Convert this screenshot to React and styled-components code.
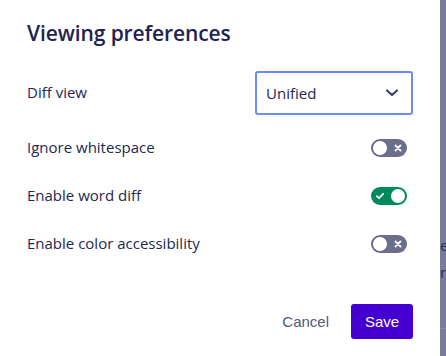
import React, { useState } from "react";
import styled, { createGlobalStyle } from "styled-components";

const Global = createGlobalStyle`
  html, body { margin: 0; padding: 0; background: #ffffff; }
  body { font-family: "Open Sans", "Noto Sans", sans-serif; }
`;

const Page = styled.div`
  display: flex;
  width: 446px;
  height: 356px;
  overflow: hidden;
`;

const Dialog = styled.div`
  width: 440px;
  flex: none;
  box-sizing: border-box;
  padding: 18px 27px 0 27px;
  display: flex;
  flex-direction: column;
  background: #ffffff;
  color: #22284f;
`;

const Title = styled.h1`
  margin: 0;
  font-family: "Open Sans", sans-serif;
  font-weight: 600;
  font-size: 21px;
  line-height: 30px;
  color: #1e2350;
  letter-spacing: -0.1px;
`;

const Rows = styled.div`
  display: flex;
  flex-direction: column;
  margin-top: 23px;
`;

const Row = styled.div`
  display: flex;
  align-items: center;
  justify-content: space-between;
  height: ${(p) => p.$h || 48}px;
  margin-bottom: ${(p) => p.$mb || 0}px;
`;

const Label = styled.span`
  font-family: "Open Sans", sans-serif;
  font-size: 15px;
  line-height: 20px;
  margin-top: -2px;
  color: #22284f;
`;

const Select = styled.div`
  box-sizing: border-box;
  width: 158px;
  height: 44px;
  border: 2px solid #6b8bfb;
  border-radius: 3px;
  display: flex;
  align-items: center;
  justify-content: space-between;
  padding: 0 12px 0 9px;
  font-family: "Open Sans", sans-serif;
  font-size: 15px;
  color: #22284f;
`;

const Toggle = styled.button`
  position: relative;
  width: 36px;
  height: 18px;
  border: none;
  padding: 0;
  margin-right: 6px;
  border-radius: 9px;
  background: ${(p) => (p.$on ? "#008a59" : "#6b6f8c")};
  cursor: pointer;
  display: flex;
  align-items: center;
`;

const Knob = styled.span`
  position: absolute;
  top: 2px;
  left: ${(p) => (p.$on ? "20px" : "2px")};
  width: 14px;
  height: 14px;
  border-radius: 50%;
  background: #ffffff;
`;

const ToggleIcon = styled.svg`
  position: absolute;
  top: 5px;
  left: ${(p) => (p.$on ? "5px" : "23px")};
  width: 8px;
  height: 8px;
`;

const Footer = styled.div`
  display: flex;
  justify-content: flex-end;
  align-items: center;
  gap: 22px;
  margin-top: 36px;
`;

const CancelBtn = styled.button`
  border: none;
  background: transparent;
  padding: 0;
  font-family: "Liberation Sans", Arial, sans-serif;
  font-size: 15px;
  color: #52587a;
  cursor: pointer;
`;

const SaveBtn = styled.button`
  width: 62px;
  height: 35px;
  border: none;
  border-radius: 3px;
  background: #4300d0;
  color: #ffffff;
  font-family: "Liberation Sans", Arial, sans-serif;
  font-size: 15px;
  cursor: pointer;
`;

const Blanket = styled.div`
  flex: 1;
  background: #7b7b99;
  overflow: hidden;
  display: flex;
  flex-direction: column;
  padding-top: 232px;
`;

const BgText = styled.span`
  font-family: "Open Sans", sans-serif;
  font-size: 15px;
  line-height: 27px;
  color: #2a2e58;
`;

const BgLine = styled.div`
  margin-top: 42px;
  height: 1px;
  background: #8d8ca8;
`;

function Switch({ on, onClick }) {
  return (
    <Toggle $on={on} onClick={onClick} aria-pressed={on}>
      <Knob $on={on} />
      <ToggleIcon $on={on} viewBox="0 0 8 8">
        {on ? (
          <path d="M0.8 4.2 L3 6.2 L7.2 1.8" stroke="#fff" strokeWidth="1.8" fill="none" strokeLinecap="round" strokeLinejoin="round" />
        ) : (
          <path d="M1.5 1.5 L6.5 6.5 M6.5 1.5 L1.5 6.5" stroke="#fff" strokeWidth="1.8" fill="none" strokeLinecap="round" />
        )}
      </ToggleIcon>
    </Toggle>
  );
}

export default function App() {
  const [ws, setWs] = useState(false);
  const [wd, setWd] = useState(true);
  const [ca, setCa] = useState(false);
  return (
    <>
      <Global />
      <Page>
        <Dialog>
          <Title>Viewing preferences</Title>
          <Rows>
            <Row $h={44} $mb={9}>
              <Label>Diff view</Label>
              <Select>
                <span>Unified</span>
                <svg width="14" height="8" viewBox="0 0 14 8">
                  <path d="M2 1.5 L7 6 L12 1.5" stroke="#3d4266" strokeWidth="2.2" fill="none" strokeLinecap="round" strokeLinejoin="round" />
                </svg>
              </Select>
            </Row>
            <Row>
              <Label>Ignore whitespace</Label>
              <Switch on={ws} onClick={() => setWs(!ws)} />
            </Row>
            <Row>
              <Label>Enable word diff</Label>
              <Switch on={wd} onClick={() => setWd(!wd)} />
            </Row>
            <Row>
              <Label>Enable color accessibility</Label>
              <Switch on={ca} onClick={() => setCa(!ca)} />
            </Row>
          </Rows>
          <Footer>
            <CancelBtn>Cancel</CancelBtn>
            <SaveBtn>Save</SaveBtn>
          </Footer>
        </Dialog>
        <Blanket>
          <BgText>e</BgText>
          <BgText>r</BgText>
          <BgLine />
        </Blanket>
      </Page>
    </>
  );
}
